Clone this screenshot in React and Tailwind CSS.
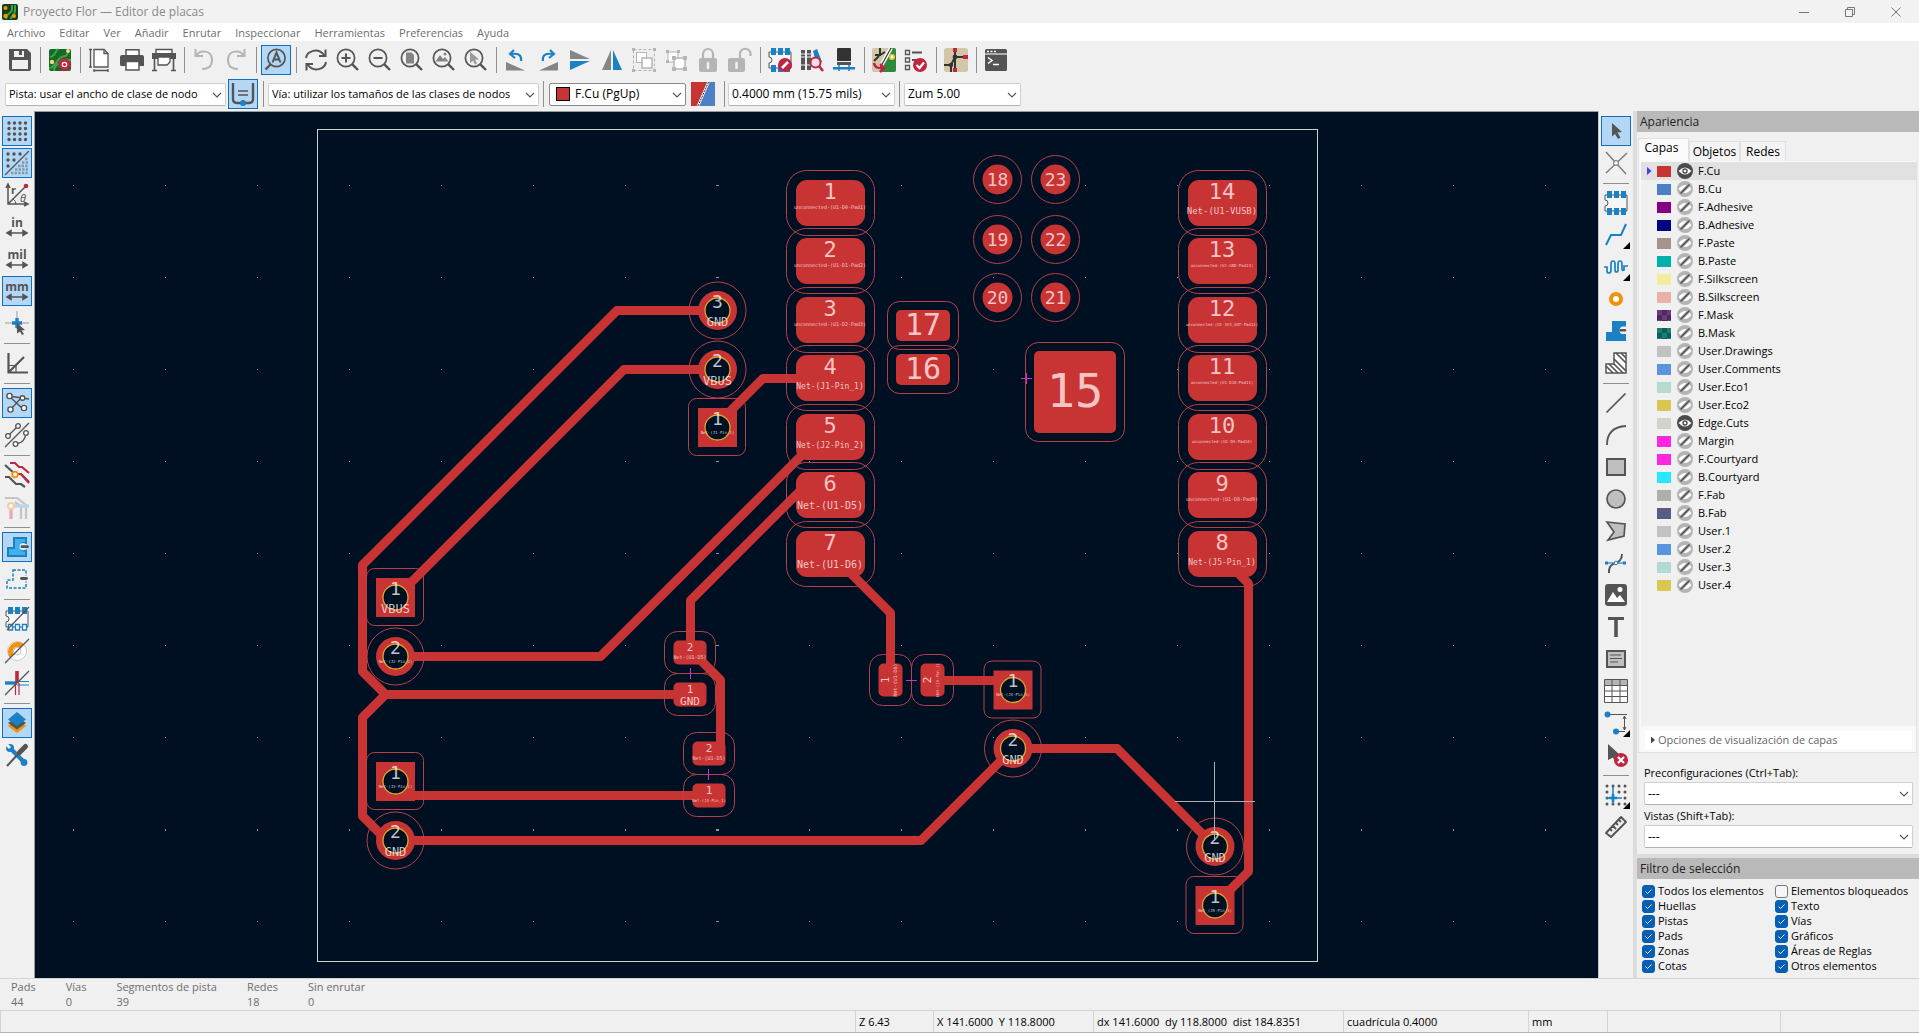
import { useState } from 'react';
import clsx from 'clsx';

const DARK = '#545454';
const BLUE = '#1a81c4';
const SOFT = '#b5b5b5';
const RED = '#bf2641';
const COPPER = '#c83434';

const Lens = ({ children }) => (
  <>
    <circle cx="12.5" cy="10" r="8.6" fill="none" stroke={DARK} strokeWidth="1.7" />
    <path d="M6.5 16.5L1.5 21.5" stroke={DARK} strokeWidth="2.4" />
    {children}
  </>
);

const LensRight = ({ children }) => (
  <>
    <circle cx="10" cy="10" r="8.6" fill="none" stroke={DARK} strokeWidth="1.7" />
    <path d="M16.3 16.3L22 22" stroke={DARK} strokeWidth="2.4" />
    {children}
  </>
);

const Footprint = () => (
  <>
    <path d="M1 4H23V20H1V15A3 3 0 0 0 1 9Z" fill="#f6f6f6" stroke={DARK} strokeWidth="1" />
    <path d="M3 0H8V7H3ZM10 0H15V7H10ZM17 0H22V7H17ZM3 17H8V24H3ZM10 17H15V24H10ZM17 17H22V24H17Z" fill={BLUE} />
  </>
);

const Measure = () => <path d="M2 18H22M2 18L6 15.5V20.5ZM22 18L18 15.5V20.5Z" fill={DARK} stroke={DARK} strokeWidth="1.5" />;

const unitClass = 'fill-[#545454] text-[12px] font-bold';

const ICONS = {
  save: (
    <path fillRule="evenodd" d="M1 1H19L23 5V21Q23 23 21 23H3Q1 23 1 21ZM6 3V9H16V3ZM11 3H14V7H11ZM4 12V21H20V12Z" fill={DARK} />
  ),
  boardSetup: (
    <>
      <rect x="1" y="1" width="22" height="22" rx="2" fill="#136b23" />
      <path d="M2 9C8 8 7 3 10 1M1 20C9 20 7 9 17 8C20 8 20 3 20 1M6 23C6 16 12 16 14 12H23" fill="none" stroke="#42a24a" strokeWidth="2" />
      <circle cx="4" cy="14" r="2.2" fill="#f4d58a" />
      <circle cx="20" cy="3" r="2" fill="#f4d58a" />
      <circle cx="16.5" cy="16.5" r="4" fill="#fff" stroke={RED} strokeWidth="2.4" />
      <circle cx="16.5" cy="16.5" r="5.8" fill="none" stroke={RED} strokeWidth="2" strokeDasharray="2.6 2" />
      <circle cx="16.5" cy="16.5" r="1.6" fill={RED} />
    </>
  ),
  page: (
    <g fill="none" stroke={DARK} strokeWidth="1.3">
      <path d="M6 1.5H16L20 5.5V19H6Z" fill="#fff" />
      <path d="M16 1.5V5.5H20M1 1.5H4M1 19H4M2.5 1.5V19M6 21V24M20 21V24M6 22.5H20" />
    </g>
  ),
  print: (
    <>
      <path d="M6 8V1.7H19V8" fill="#fff" stroke={DARK} strokeWidth="1.5" />
      <path d="M2 7H22Q24 7 24 9V18H19V14H6V18H1Q0 18 0 16V9Q0 7 2 7Z" fill={DARK} />
      <path d="M6 13.5H19V22H6Z" fill="#fff" stroke={DARK} strokeWidth="1.5" />
    </>
  ),
  plot: (
    <>
      <path d="M4 6V1.5H20V6" fill="#fff" stroke={DARK} strokeWidth="1.4" />
      <path d="M0 5H24V11H0Z" fill={DARK} />
      <path d="M6 9H18V14L15 17H6Z" fill="#fff" stroke={DARK} strokeWidth="1.3" />
      <path d="M2.5 11V22M21.5 11V22M0 22.5H5M19 22.5H24" stroke={DARK} strokeWidth="1.6" />
    </>
  ),
  undo: <path d="M3.500 1V8H11M4 8C8 1 20 2 20 12C20 18 16 21 10 21" fill="none" stroke={SOFT} strokeWidth="2" />,
  redo: <path d="M20.500 1V8H13M20 8C16 1 4 2 4 12C4 18 8 21 14 21" fill="none" stroke={SOFT} strokeWidth="2" />,
  find: (
    <Lens>
      <path d="M8.5 14.5L12.5 4.5L16.5 14.5M10 11.5H15" fill="none" stroke={DARK} strokeWidth="2" />
    </Lens>
  ),
  refresh: (
    <path d="M2 10C3 3 14 -1 20 7M21.5 1.5V8H15M22 14C21 21 10 25 4 17M2.5 22.5V16H9" fill="none" stroke={DARK} strokeWidth="2" />
  ),
  zoomIn: (
    <LensRight>
      <path d="M10 5.5V14.5M5.5 10H14.5" stroke={DARK} strokeWidth="2" />
    </LensRight>
  ),
  zoomOut: (
    <LensRight>
      <path d="M5.5 10H14.5" stroke={DARK} strokeWidth="2" />
    </LensRight>
  ),
  zoomPage: (
    <LensRight>
      <path d="M6 4.5H11.5L14 7V15.5H6Z" fill="#858585" />
    </LensRight>
  ),
  zoomObjects: (
    <LensRight>
      <path d="M3.5 13.5L8 7L11 11L13 9L16.5 13.5Z" fill="#858585" />
      <circle cx="13" cy="6" r="1.5" fill="#858585" />
    </LensRight>
  ),
  zoomSelection: (
    <LensRight>
      <path d="M6 3.5L15 11.5L11 11.8L13 15.5L11 16.5L9 12.8L6 15Z" fill="#9a9a9a" />
    </LensRight>
  ),
  rotateLeft: (
    <>
      <path d="M2 14V22.5H21Z" fill="#858585" />
      <path d="M17 13C18 7 14 5 8 6" fill="none" stroke={BLUE} strokeWidth="2.2" />
      <path d="M10 2L6 6L11 10" fill="none" stroke={BLUE} strokeWidth="2.2" />
    </>
  ),
  rotateRight: (
    <>
      <path d="M22 14V22.5H3Z" fill="#858585" />
      <path d="M7 13C6 7 10 5 16 6" fill="none" stroke={BLUE} strokeWidth="2.2" />
      <path d="M14 2L18 6L13 10" fill="none" stroke={BLUE} strokeWidth="2.2" />
    </>
  ),
  flipV: (
    <>
      <path d="M2 2V11H22Z" fill="#858585" />
      <path d="M2 22V13H22Z" fill={BLUE} />
    </>
  ),
  flipH: (
    <>
      <path d="M2 22H11V2Z" fill="#858585" />
      <path d="M22 22H13V2Z" fill={BLUE} />
    </>
  ),
  group: (
    <g stroke={SOFT} fill="none">
      <rect x="1.5" y="1.5" width="21" height="21" strokeDasharray="3 2" />
      <rect x="4.5" y="4.5" width="10" height="10" fill="#fff" />
      <rect x="10" y="10" width="10" height="10" fill="#fff" strokeWidth="1.5" />
      <path d="M0 0H3V3H0ZM21 0H24V3H21ZM0 21H3V24H0ZM21 21H24V24H21Z" fill={SOFT} stroke="none" />
    </g>
  ),
  ungroup: (
    <g stroke={SOFT} fill="#fff">
      <rect x="4" y="4" width="10" height="10" />
      <rect x="10" y="10" width="11" height="11" strokeWidth="1.5" />
      <path d="M2 2H5V5H2ZM13 2H16V5H13ZM2 12H5V15H2ZM8 8H12V12H8ZM19 8H23V12H19ZM8 19H12V23H8ZM19 19H23V23H19Z" fill={SOFT} stroke="none" />
    </g>
  ),
  lock: (
    <>
      <path d="M7 12V6A5 5 0 0 1 17 6V12" fill="none" stroke={SOFT} strokeWidth="2.2" />
      <rect x="3" y="10" width="18" height="14" rx="2" fill={SOFT} />
      <path d="M12 15V20" stroke="#f0f0f0" strokeWidth="2.6" strokeLinecap="round" />
    </>
  ),
  unlock: (
    <>
      <path d="M12 12V6A5 5 0 0 1 22.5 6V8" fill="none" stroke={SOFT} strokeWidth="2.2" />
      <rect x="0" y="10" width="17" height="14" rx="2" fill={SOFT} />
      <path d="M8.5 15V20" stroke="#f0f0f0" strokeWidth="2.6" strokeLinecap="round" />
    </>
  ),
  footprintEdit: (
    <>
      <Footprint />
      <circle cx="17" cy="17" r="7" fill={RED} />
      <path d="M14 20L20 14" stroke="#fff" strokeWidth="2.6" />
    </>
  ),
  library: (
    <>
      <path d="M1 2H5V22H1ZM7 2H11V22H7Z" fill={DARK} />
      <path d="M1 6H11M1 9H11M1 17H11" stroke="#ededed" strokeWidth="1" />
      <path d="M13 3L17 1L22 14H16Z" fill={BLUE} />
      <circle cx="15.5" cy="14.5" r="5" fill="#f7dfe5" stroke={RED} strokeWidth="2" />
      <path d="M19 18L23 23" stroke={RED} strokeWidth="2.6" />
    </>
  ),
  footprintBrowse: (
    <>
      <path d="M5 1Q5 0 6 0H18Q19 0 19 1V13H5Z" fill="#333" />
      <path d="M5 14H19V17H5Z" fill={DARK} />
      <path d="M1 19H23V21.5H1Z" fill={BLUE} />
      <path d="M7 17V23M17 17V23" stroke={BLUE} strokeWidth="1.5" />
    </>
  ),
  updateBoard: (
    <>
      <path d="M2 0H22Q24 0 24 2V22Q24 24 22 24H2Q0 24 0 22V2Q0 0 2 0Z" fill="#d3c6a8" />
      <path d="M17 0H22Q24 0 24 2V22Q24 24 22 24H8Z" fill="#2e8b3a" />
      <path d="M8 0V7H3M8 7L13 4M2 13L7 8" stroke="#333" strokeWidth="2" fill="none" />
      <path d="M19 0L8 20" stroke="#fff" strokeWidth="4" />
      <path d="M19 0L8 20" stroke="#333" strokeWidth="1.2" />
      <circle cx="20" cy="9" r="2.2" fill="#fff" stroke="#f4c430" strokeWidth="1.6" />
      <path d="M2 15C3 20 6 20 11 20M8 16L12 20L8 24" fill="none" stroke={RED} strokeWidth="2.6" />
    </>
  ),
  drc: (
    <>
      <g fill="none" stroke={DARK} strokeWidth="1.3">
        <path d="M1.5 2.5H5.5V6.5H1.5ZM1.5 10H5.5V14H1.5ZM1.5 17.5H5.5V21.5H1.5Z" />
        <path d="M8 4.5H18M8 12H14" strokeWidth="2" />
      </g>
      <circle cx="16" cy="17" r="7" fill={RED} />
      <path d="M12.5 17L15.5 20L20 14.5" fill="none" stroke="#fff" strokeWidth="2.2" />
    </>
  ),
  schematic: (
    <>
      <rect width="24" height="24" rx="2.5" fill="#d3c6a8" />
      <path d="M11 0V9L7 17V24M11 9H24M0 17H7M11 9V24" stroke="#333" strokeWidth="2" fill="none" />
      <path d="M9 0H13V4H9ZM19 7H24V11H19ZM9 20H13V24H9Z" fill={RED} />
      <circle cx="11" cy="9" r="2.4" fill="#333" />
      <circle cx="7" cy="17" r="2.2" fill="#333" />
    </>
  ),
  console: (
    <>
      <rect x="1" y="1" width="22" height="22" rx="1.5" fill={DARK} />
      <path d="M1 6H23" stroke="#ededed" strokeWidth="1.2" />
      <path d="M3 3.5H5M6.5 3.5H8.5M10 3.5H12M4 9.5L8 12.5L4 15.5M9 16.5H15" fill="none" stroke="#fff" strokeWidth="1.5" />
    </>
  ),
  trackWidth: (
    <>
      <path d="M2 1V17Q2 21 6 21H18Q22 21 22 17V1" fill="none" stroke={DARK} strokeWidth="2.4" />
      <path d="M7 9H17M7 13H17" stroke={DARK} strokeWidth="1.4" />
      <circle cx="12" cy="21" r="3" fill={BLUE} />
    </>
  ),
  layerPair: (
    <>
      <path d="M0 0H24V24H0Z" fill="#4d7fc4" />
      <path d="M0 0H17L6 24H0Z" fill={COPPER} />
      <path d="M17.5 0L7 24" stroke="#fff" strokeWidth="2.4" />
      <path d="M17.5 0L7 24" stroke="#333" strokeWidth="1" strokeDasharray="2 1" />
    </>
  ),
  grid: (
    <path d="M4 4h.01M9.500 4h.01M15 4h.01M20.500 4h.01M4 9.500h.01M9.500 9.500h.01M15 9.500h.01M20.500 9.500h.01M4 15h.01M9.500 15h.01M15 15h.01M20.500 15h.01M4 20.500h.01M9.500 20.500h.01M15 20.500h.01M20.500 20.500h.01" stroke={DARK} strokeWidth="3.4" strokeLinecap="round" />
  ),
  gridOverride: (
    <>
      <path d="M3 3h.01M9 3h.01M15 3h.01M3 9h.01M9 9h.01M3 15h.01" stroke={DARK} strokeWidth="3.4" strokeLinecap="round" />
      <path d="M0 24L24 0" stroke={DARK} strokeWidth="1.2" />
      <path d="M20 8H23M17 11.5H23M13 15H23M10 18.5H23M6 22H23" stroke="#8298ab" strokeWidth="2.4" strokeDasharray="2.4 1.2" />
    </>
  ),
  polar: (
    <>
      <path d="M3 1V21H23M3 21L20 4M1 5L3 1L5 5M19 19L23 21L19 23" fill="none" stroke={DARK} strokeWidth="1.5" />
      <path d="M8 16Q11 18 11 21" fill="none" stroke={DARK} />
      <circle cx="21" cy="3" r="2.3" fill={RED} />
      <text x="6" y="11" className="fill-[#545454] text-[11px] font-bold">r</text>
      <text x="15" y="19" className="fill-[#545454] text-[11px] italic">θ</text>
    </>
  ),
  inches: (
    <>
      <text x="12" y="12" textAnchor="middle" className={unitClass}>in</text>
      <Measure />
    </>
  ),
  mils: (
    <>
      <text x="12" y="12" textAnchor="middle" className={unitClass}>mil</text>
      <Measure />
    </>
  ),
  millimeters: (
    <>
      <text x="12" y="12" textAnchor="middle" className={unitClass}>mm</text>
      <Measure />
    </>
  ),
  cursor: (
    <>
      <path d="M0 12H24M12 0V18" stroke="#9a9a9a" strokeWidth="1" />
      <path d="M7 12H17M12 7V17" stroke={BLUE} strokeWidth="3.4" />
      <path d="M12 12L20 19L16.5 19.5L19 23L17 24L15 20.5L12 22.5Z" fill={DARK} />
    </>
  ),
  angle: (
    <>
      <path d="M3.5 2V21.5H23M3.5 21.5L19 6" fill="none" stroke={DARK} strokeWidth="2.2" />
      <path d="M4 14.5H11V21" fill="none" stroke={DARK} strokeWidth="1.2" />
    </>
  ),
  ratsnest: (
    <>
      <path d="M4 5L19 19M6 18L17 6M4 5L17 7L24 8" stroke={DARK} strokeWidth="1.4" fill="none" />
      <g fill="#fff" stroke={DARK} strokeWidth="1.4">
        <circle cx="4.5" cy="5" r="2.6" />
        <circle cx="17.5" cy="7" r="2.3" />
        <circle cx="5.5" cy="18.5" r="2.6" />
        <circle cx="19" cy="17" r="2.6" />
      </g>
    </>
  ),
  ratsnestCurved: (
    <>
      <path d="M0 24L24 0M3 13L13 3M11 21Q20 20 21 10" stroke={DARK} strokeWidth="1.3" fill="none" />
      <g fill="#fff" stroke={DARK} strokeWidth="1.3">
        <circle cx="3" cy="13" r="2.3" />
        <circle cx="13" cy="3" r="2.3" />
        <circle cx="10.5" cy="21" r="2.3" />
        <circle cx="21" cy="10" r="2.3" />
      </g>
    </>
  ),
  highContrast: (
    <>
      <path d="M0 2L10 11H16L24 19M0 14H4L11 21H16L20 24" fill="none" stroke={DARK} strokeWidth="2.2" />
      <path d="M5 0H10L14 4H17L24 10M12 11H16L24 20" fill="none" stroke={RED} strokeWidth="2.2" />
      <circle cx="10" cy="11.5" r="2.8" fill="#fff" stroke="#f0920a" strokeWidth="1.8" />
    </>
  ),
  netHighlight: (
    <g opacity="0.5" fill="none">
      <path d="M0 3H12L21 10V24M10 7L16 11V24" stroke="#9a9a9a" strokeWidth="2.2" />
      <path d="M6 12V24" stroke="#e0607a" strokeWidth="3.2" />
      <path d="M6 11H24" stroke="#7ec0ea" strokeWidth="3.2" />
      <circle cx="6" cy="11" r="3" fill="#fff" stroke="#f4b04a" strokeWidth="2" />
    </g>
  ),
  zoneFill: (
    <>
      <path d="M9 3H21V8H18A4 4 0 0 0 18 15.500H21V21H3V13H9Z" fill="#42b0ee" stroke={BLUE} strokeWidth="2" />
      <circle cx="18" cy="11.7" r="3.6" fill="#d7ecfa" />
      <path d="M17 11.7H22.5" stroke={DARK} strokeWidth="2.8" strokeLinecap="round" />
    </>
  ),
  zoneOutline: (
    <>
      <path d="M8 3H21V21H2V13H8Z" fill="none" stroke={BLUE} strokeWidth="1.5" strokeDasharray="3 1.5" />
      <path d="M14 11.5H22" stroke="#f0f0f0" strokeWidth="6" />
      <path d="M16.5 11.5H21.5" stroke={DARK} strokeWidth="2.8" strokeLinecap="round" />
    </>
  ),
  padOutline: (
    <>
      <path d="M1 4H23V20H1V15A3 3 0 0 0 1 9Z" fill="#f6f6f6" stroke={DARK} />
      <path d="M3 0H8V7H3ZM10 0H15V7H10ZM17 0H22V7H17Z" fill={BLUE} />
      <path d="M3.5 17.5H7.5V23H3.5ZM10.5 17.5H14.5V23H10.5ZM17.5 17.5H21.5V23H17.5Z" fill="#fff" stroke={BLUE} strokeWidth="1.3" />
      <path d="M2 23L24 0" stroke={DARK} strokeWidth="1.2" />
    </>
  ),
  viaOutline: (
    <>
      <circle cx="12" cy="12" r="9.5" fill="#fff" stroke="#c9c9c9" />
      <path d="M5 19A10 10 0 0 1 19 5L15 9A4.500 4.500 0 0 0 9 15Z" fill="#f0920a" />
      <circle cx="12" cy="12" r="4" fill="none" stroke="#c9c9c9" />
      <path d="M0 24L24 0" stroke={DARK} strokeWidth="1.2" />
    </>
  ),
  trackOutline: (
    <>
      <path d="M0 12H12" stroke={BLUE} strokeWidth="3.4" />
      <path d="M12 0V12" stroke={RED} strokeWidth="3.6" />
      <path d="M12 10.5H24M12 14H24" stroke={BLUE} strokeWidth="1.2" />
      <path d="M10.5 12V24M14 12V24" stroke={RED} strokeWidth="1.2" />
      <path d="M0 24L24 0" stroke={DARK} strokeWidth="1.2" />
    </>
  ),
  layers: (
    <>
      <path d="M12 8L21 15L12 22L3 15Z" fill="#f0920a" />
      <path d="M12 6L21 12L12 18.5L3 12Z" fill={DARK} />
      <path d="M12 1L21 8.5L12 15L3 8.5Z" fill={BLUE} />
    </>
  ),
  tools: (
    <>
      <path d="M5 5L19 19" stroke={BLUE} strokeWidth="4.2" />
      <circle cx="5" cy="5" r="4" fill={BLUE} />
      <path d="M0 0L5 5" stroke="#f0f0f0" strokeWidth="3" />
      <circle cx="19" cy="19.5" r="3.4" fill={BLUE} />
      <path d="M2 23L15 9" stroke={DARK} strokeWidth="2" />
      <path d="M14.5 9.5L20.5 3.5" stroke={DARK} strokeWidth="5" strokeLinecap="round" />
    </>
  ),
  select: <path d="M8 4L18 13L13.500 13.500L16.500 18.500L14 20L11 15L8 17.500Z" fill={DARK} />,
  highlightNet: (
    <>
      <path d="M2 1L22 23M23 2L2 22" stroke="#7a7a7a" strokeWidth="1.4" />
      <circle cx="12" cy="12" r="2.4" fill="#fff" stroke="#8a8a8a" strokeWidth="1.3" />
    </>
  ),
  footprint: <Footprint />,
  route: <path d="M2 22L7 12H17L22 1" fill="none" stroke={BLUE} strokeWidth="2" />,
  tuneLength: (
    <path d="M0 12H3V16Q3 18 5 18T7 15V9Q7 6 9 6T11 9V15Q11 17 12.500 17T14 15V9Q14 6 16 6T18 9V14Q18 16 20 15V11H24" fill="none" stroke={BLUE} strokeWidth="1.7" />
  ),
  via: <circle cx="12" cy="12" r="5" fill="#fff" stroke="#f0920a" strokeWidth="4" />,
  zone: (
    <>
      <path d="M8 2H22V7.500H18A4 4 0 0 0 18 15H22V22H2V13H8Z" fill={BLUE} />
      <path d="M16.500 11.200H21" stroke={DARK} strokeWidth="2.400" strokeLinecap="round" />
    </>
  ),
  ruleArea: (
    <>
      <path d="M10 2H22V22H2V13H10Z" fill="#fff" stroke={DARK} strokeWidth="1.5" />
      <path d="M10 8L22 20M12 2L22 12M17 2L22 7M10 13L19 22M5 13L14 22M2 15L9 22" stroke={DARK} strokeWidth="1.7" />
    </>
  ),
  line: <path d="M3 21L21 3" stroke={DARK} strokeWidth="1.7" strokeLinecap="round" />,
  arc: <path d="M3 22Q3 4 22 3" fill="none" stroke={DARK} strokeWidth="1.8" />,
  rect: <path d="M3 4H21V20H3Z" fill="#bfbfbf" stroke={DARK} strokeWidth="2" />,
  circle: <circle cx="12" cy="12" r="9" fill="#bfbfbf" stroke={DARK} strokeWidth="1.7" />,
  polygon: <path d="M3 3L21 5L20 17L4 21L10 13Z" fill="#bfbfbf" stroke={DARK} strokeWidth="1.7" />,
  bezier: (
    <>
      <path d="M5 22C4 8 18 16 18 3" fill="none" stroke={DARK} strokeWidth="1.9" />
      <path d="M3 12H21" stroke={BLUE} strokeWidth="1.2" />
      <path d="M1 10.5H4V13.5H1ZM19 10.5H22V13.5H19Z" fill={BLUE} />
      <circle cx="12" cy="12" r="1.8" fill="#fff" stroke={BLUE} />
    </>
  ),
  image: (
    <>
      <rect x="1" y="1" width="22" height="22" rx="3" fill={DARK} />
      <path d="M3 19L9 9L13 15L16 12L21 19Z" fill="#fff" />
      <circle cx="16" cy="6.5" r="2.5" fill="#fff" />
    </>
  ),
  text: <path d="M4 2H20V5H13.800V22H10.200V5H4Z" fill={DARK} />,
  textBox: (
    <>
      <path d="M3 4H21V20H3Z" fill="#bfbfbf" stroke={DARK} strokeWidth="2" />
      <path d="M6 8H17M6 11.5H18M6 15H14" stroke={DARK} strokeWidth="1.2" />
    </>
  ),
  table: (
    <>
      <path d="M0.5 0.5H23.5V23.5H0.5Z" fill="#fff" stroke={DARK} />
      <path d="M1 1H23V6H1Z" fill="#b5b5b5" />
      <path d="M0 6.5H24M0 12H24M0 17.5H24M8 0V24M16 0V24" stroke={DARK} />
    </>
  ),
  dimension: (
    <>
      <path d="M3 3.5H23M12 20.5H21M20.5 5V19M19 8L20.5 5L22 8M19 16L20.5 19L22 16" fill="none" stroke={DARK} />
      <circle cx="3.5" cy="3.5" r="3" fill={BLUE} />
      <circle cx="12" cy="20.5" r="3" fill={BLUE} />
    </>
  ),
  deleteTool: (
    <>
      <path d="M4 1L16 12L11 13L13.5 18L11 19L9 14.5L4 17Z" fill={DARK} />
      <circle cx="17" cy="17" r="7" fill={RED} />
      <path d="M14 14L20 20M20 14L14 20" stroke="#fff" strokeWidth="2.2" />
    </>
  ),
  gridOrigin: (
    <>
      <path d="M3 3h.01M9 3h.01M15 3h.01M21 3h.01M3 9h.01M15 9h.01M21 9h.01M3 15h.01M21 15h.01M3 21h.01M9 21h.01M15 21h.01M21 21h.01" stroke={DARK} strokeWidth="3" strokeLinecap="round" />
      <path d="M9 4V21M2 15H18" stroke={BLUE} strokeWidth="1.5" />
      <path d="M9 11V19M5 15H13" stroke={BLUE} strokeWidth="2.6" />
    </>
  ),
  ruler: (
    <path d="M2 18L17 2L22 7L7 22ZM6 14L8 16M9 11L12 14M12 8L14 10M15 5L17 7" fill="none" stroke={DARK} strokeWidth="1.9" strokeLinejoin="round" />
  ),
};

const MENUS = ['Archivo', 'Editar', 'Ver', 'Añadir', 'Enrutar', 'Inspeccionar', 'Herramientas', 'Preferencias', 'Ayuda'];

// '|' is a separator
const TOP_TOOLS = [
  'save', '|', 'boardSetup', '|', 'page', 'print', 'plot', '|', 'undo', 'redo', '|', 'find', '|',
  'refresh', 'zoomIn', 'zoomOut', 'zoomPage', 'zoomObjects', 'zoomSelection', '|',
  'rotateLeft', 'rotateRight', 'flipV', 'flipH', 'group', 'ungroup', 'lock', 'unlock', '|',
  'footprintEdit', 'library', 'footprintBrowse', '|', 'updateBoard', 'drc', '|', 'schematic', '|', 'console',
];

const LEFT_TOOLS = [
  'grid', 'gridOverride', 'polar', 'inches', 'mils', 'millimeters', 'cursor', '|', 'angle', '|',
  'ratsnest', 'ratsnestCurved', '|', 'highContrast', 'netHighlight', '|', 'zoneFill', 'zoneOutline', '|',
  'padOutline', 'viaOutline', 'trackOutline', '|', 'layers', 'tools',
];

const RIGHT_TOOLS = [
  'select', 'highlightNet', '|', 'footprint', 'route', 'tuneLength', 'via', 'zone', 'ruleArea', '|',
  'line', 'arc', 'rect', 'circle', 'polygon', 'bezier', 'image', 'text', 'textBox', 'table',
  'dimension', 'deleteTool', '|', 'gridOrigin', 'ruler',
];

const ACTIVE = ['find', 'trackWidth', 'grid', 'gridOverride', 'millimeters', 'ratsnest', 'zoneFill', 'layers', 'select'];
const WITH_PALETTE = ['route', 'tuneLength', 'dimension', 'gridOrigin'];

const LAYERS = [
  ['F.Cu', 'bg-[#c83434]'],
  ['B.Cu', 'bg-[#4d7fc4]'],
  ['F.Adhesive', 'bg-[#840084]'],
  ['B.Adhesive', 'bg-[#000084]'],
  ['F.Paste', 'bg-[#a6948b]'],
  ['B.Paste', 'bg-[#00b0ad]'],
  ['F.Silkscreen', 'bg-[#f2eda1]'],
  ['B.Silkscreen', 'bg-[#e8b2a7]'],
  ['F.Mask', 'bg-[repeating-conic-gradient(#4b2a63_0_25%,#6a3c7c_0_50%)] bg-size-[10px_10px]'],
  ['B.Mask', 'bg-[repeating-conic-gradient(#0c5f57_0_25%,#1c7f72_0_50%)] bg-size-[10px_10px]'],
  ['User.Drawings', 'bg-[#c2c2c2]'],
  ['User.Comments', 'bg-[#5994dc]'],
  ['User.Eco1', 'bg-[#b4dbd2]'],
  ['User.Eco2', 'bg-[#d8c852]'],
  ['Edge.Cuts', 'bg-[#d0d2cd]'],
  ['Margin', 'bg-[#ff26e2]'],
  ['F.Courtyard', 'bg-[#ff26e2]'],
  ['B.Courtyard', 'bg-[#26e9ff]'],
  ['F.Fab', 'bg-[#afafaf]'],
  ['B.Fab', 'bg-[#585d84]'],
  ['User.1', 'bg-[#c2c2c2]'],
  ['User.2', 'bg-[#5994dc]'],
  ['User.3', 'bg-[#b4dbd2]'],
  ['User.4', 'bg-[#d8c852]'],
];

const FILTERS = [
  ['Todos los elementos', true],
  ['Elementos bloqueados', false],
  ['Huellas', true],
  ['Texto', true],
  ['Pistas', true],
  ['Vías', true],
  ['Pads', true],
  ['Gráficos', true],
  ['Zonas', true],
  ['Áreas de Reglas', true],
  ['Cotas', true],
  ['Otros elementos', true],
];

const STATS = [
  ['Pads', '44'],
  ['Vías', '0'],
  ['Segmentos de pista', '39'],
  ['Redes', '18'],
  ['Sin enrutar', '0'],
];

const ToolButton = ({ name }) => (
  <button
    type="button"
    aria-label={name}
    className={clsx(
      'relative m-px flex size-[30px] shrink-0 items-center justify-center border',
      ACTIVE.includes(name) ? 'border-[#0f6fc0] bg-[#b3d7f5]' : 'border-transparent'
    )}
  >
    <svg viewBox="0 0 24 24" className="size-6 overflow-visible">{ICONS[name]}</svg>
    {WITH_PALETTE.includes(name) && (
      <span className="absolute right-0 bottom-0 size-[7px] bg-black [clip-path:polygon(100%_0,100%_100%,0_100%)]" />
    )}
  </button>
);

const VerticalTools = ({ tools }) => (
  <div className="flex w-[34px] shrink-0 flex-col items-center bg-[#f0f0f0] pt-1">
    {tools.map((tool, i) =>
      tool === '|' ? (
        <div key={i} className="flex h-2 shrink-0 items-center">
          <div className="h-px w-[26px] bg-[#8f8f8f]" />
        </div>
      ) : (
        <ToolButton key={i} name={tool} />
      )
    )}
  </div>
);

const Separator = () => (
  <div className="flex h-8 w-2 shrink-0 items-center justify-center">
    <div className="h-[26px] w-px bg-[#8f8f8f]" />
  </div>
);

const Combo = ({ label, value, width, swatch, small }) => (
  <div className={clsx('relative h-[23px] shrink-0', width)}>
    <select
      aria-label={label}
      className={clsx(
        'h-full w-full appearance-none rounded-xs border bg-white pr-5 text-black outline-none',
        swatch ? 'border-[#8a8a8a] pl-[25px]' : 'border-[#cfcfcf] border-b-[#b0b0b0] pl-[3px]',
        small ? 'text-[11px]' : 'text-[12px]'
      )}
    >
      <option>{value}</option>
    </select>
    {swatch && <span className="pointer-events-none absolute top-[4px] left-[7px] size-[14px] border border-black bg-[#c83434]" />}
    <svg viewBox="0 0 10 6" className="pointer-events-none absolute top-[9px] right-[4px] h-[6px] w-[10px]">
      <path d="M1 1L5 5L9 1" fill="none" stroke="#555" strokeWidth="1.1" />
    </svg>
  </div>
);

const EyeIcon = ({ visible }) =>
  visible ? (
    <svg viewBox="0 0 16 16" className="size-4">
      <circle cx="8" cy="8" r="8" fill="#4b4b4b" />
      <path d="M1.500 8Q8 1 14.500 8Q8 15 1.500 8Z" fill="#fff" />
      <circle cx="8" cy="8" r="2" fill="#fff" stroke="#4b4b4b" strokeWidth="1.4" />
    </svg>
  ) : (
    <svg viewBox="0 0 16 16" className="size-4">
      <circle cx="8" cy="8" r="8" fill="#b4b4b4" />
      <path d="M1.500 8Q8 0 14.500 8Q8 16 1.500 8Z" fill="#fff" />
      <path d="M3.500 12.500L12.500 3.500" stroke="#b4b4b4" strokeWidth="3.4" />
      <path d="M3.500 12.500L12.500 3.500" stroke="#4b4b4b" strokeWidth="1.4" />
    </svg>
  );

/* Board */

const TRACKS = [
  'M717 310.5H617L362.5 565V671.5L385.5 694.5H690',
  'M385.5 694.5L362.5 717.5V816L387 840.5',
  'M717 369.5H624L395.5 598',
  'M830 378.5H763L717 424.5',
  'M812 445L600.5 656.5H396',
  'M804 487L690.5 600.5V650L720.5 680V748',
  'M396 795.5H708',
  'M396 840.5H921L1013 748.5H1117L1215 846.5',
  'M848 570.5L890.5 613V680',
  'M932 680.5H1013',
  'M1238 573L1248.5 583.5V871.5L1215 905',
];

const LEFT_PADS = [
  ['1', 'unconnected-(U1-D0-Pad1)'],
  ['2', 'unconnected-(U1-D1-Pad2)'],
  ['3', 'unconnected-(U1-D2-Pad3)'],
  ['4', 'Net-(J1-Pin_1)'],
  ['5', 'Net-(J2-Pin_2)'],
  ['6', 'Net-(U1-D5)'],
  ['7', 'Net-(U1-D6)'],
];

const RIGHT_PADS = [
  ['14', 'Net-(U1-VUSB)'],
  ['13', 'unconnected-(U1-GND-Pad13)'],
  ['12', 'unconnected-(U1-3V3_OUT-Pad12)'],
  ['11', 'unconnected-(U1-D10-Pad11)'],
  ['10', 'unconnected-(U1-D9-Pad10)'],
  ['9', 'unconnected-(U1-D8-Pad9)'],
  ['8', 'Net-(J5-Pin_1)'],
];

const PAD_Y = [180, 238, 297, 355, 414, 472, 531];

const ROUND_PADS = [
  ['18', 997.5, 179.5],
  ['23', 1055.5, 179.5],
  ['19', 997.5, 239.5],
  ['22', 1055.5, 239.5],
  ['20', 997.5, 297.5],
  ['21', 1055.5, 297.5],
];

const HOLES = [
  { x: 717.5, y: 310.5, num: '3', net: 'GND' },
  { x: 717.5, y: 369.5, num: '2', net: 'VBUS' },
  { x: 717.5, y: 427.5, num: '1', net: 'Net-(J1-Pin_1)', square: true },
  { x: 395.5, y: 597.5, num: '1', net: 'VBUS', square: true },
  { x: 395.5, y: 656.5, num: '2', net: 'Net-(J2-Pin_2)' },
  { x: 395.5, y: 781.5, num: '1', net: 'Net-(J3-Pin_1)', square: true },
  { x: 395.5, y: 840.5, num: '2', net: 'GND' },
  { x: 1013, y: 690, num: '1', net: 'Net-(J4-Pin_1)', square: true },
  { x: 1013, y: 748.5, num: '2', net: 'GND' },
  { x: 1215, y: 846.5, num: '2', net: 'GND' },
  { x: 1215, y: 905.5, num: '1', net: 'Net-(J5-Pin_1)', square: true },
];

const SMD_PADS = [
  { x: 690, y: 652.5, num: '2', net: 'Net-(U1-D5)' },
  { x: 690, y: 694.5, num: '1', net: 'GND' },
  { x: 709, y: 753.5, num: '2', net: 'Net-(U1-D5)' },
  { x: 709, y: 795.5, num: '1', net: 'Net-(J3-Pin_1)' },
  { x: 890.5, y: 680, num: '1', net: 'Net-(U1-D6)', turned: true },
  { x: 932.5, y: 680, num: '2', net: 'Net-(J4-Pin_1)', turned: true },
];

// long net names shrink to stay inside the pad
const netSize = (net) => {
  if (net.length > 24) return 'text-[4px]';
  if (net.length > 20) return 'text-[5px]';
  if (net.length > 13) return 'text-[8px]';
  return net.length > 11 ? 'text-[9px]' : 'text-[10px]';
};

const ModulePad = ({ x, y, num, net }) => (
  <g textAnchor="middle">
    <rect x={x - 34} y={y} width="69" height="46" rx="11" fill={COPPER} />
    <text x={x} y={y + 19} className="text-[22px]">{num}</text>
    <text x={x} y={y + (net.length > 20 ? 29 : net.length > 11 ? 34 : 37)} className={netSize(net)}>{net}</text>
  </g>
);

const Hole = ({ x, y, num, net, square }) => {
  const long = net.length > 4;
  return (
    <g textAnchor="middle">
      {square ? (
        <rect x={x - 19.5} y={y - 19.5} width="39" height="39" fill={COPPER} />
      ) : (
        <circle cx={x} cy={y} r="19.5" fill={COPPER} />
      )}
      <circle cx={x} cy={y} r="12.5" fill="#001023" stroke="#d8a92c" strokeWidth="1.3" />
      <g className="fill-white/75">
        <text x={x} y={y - 3} className="text-[18px]">{num}</text>
        <text x={x} y={y + (long ? 6 : 15)} className={long ? 'text-[4px]' : 'text-[12px]'}>{net}</text>
      </g>
    </g>
  );
};

const SmdPad = ({ x, y, num, net, turned }) => (
  <g textAnchor="middle" transform={`translate(${x} ${y}) rotate(${turned ? -90 : 0})`}>
    <rect x="-16.5" y="-12" width="33" height="24" rx="5" fill={COPPER} />
    <text x="0" y="-2" className="text-[11px]">{num}</text>
    <text x="0" y={net === 'GND' ? 10 : 6} className={net === 'GND' ? 'text-[11px]' : net.length > 12 ? 'text-[4px]' : 'text-[5px]'}>{net}</text>
  </g>
);

const columns = Array.from({ length: 17 }, (_, i) => 73 + i * 92);
const rows = Array.from({ length: 9 }, (_, i) => 185 + i * 92);

const Board = () => (
  <svg
    viewBox="35 112 1563 866"
    preserveAspectRatio="xMidYMid slice"
    className="block h-full w-full bg-[#001023] fill-[#f5c4c4] font-['DejaVu_Sans_Mono',monospace]"
  >
    {rows.map((y) =>
      columns.map((x) => (
        <rect key={`${x}-${y}`} x={x === 717 ? 716 : x} y={y} width={x === 717 ? 3 : 1} height={y === 829 ? 2 : 1} fill="#8d949c" />
      ))
    )}
    <rect x="317.5" y="129.5" width="1000" height="832" fill="none" stroke="#d0d2cd" />

    <g fill="none" stroke={COPPER} strokeWidth="9" strokeLinejoin="round">
      {TRACKS.map((d) => <path key={d} d={d} />)}
    </g>

    {LEFT_PADS.map(([num, net], i) => <ModulePad key={num} x={830} y={PAD_Y[i]} num={num} net={net} />)}
    {RIGHT_PADS.map(([num, net], i) => <ModulePad key={num} x={1222} y={PAD_Y[i]} num={num} net={net} />)}
    {ROUND_PADS.map(([num, x, y]) => (
      <g key={num} textAnchor="middle">
        <circle cx={x} cy={y} r="15" fill={COPPER} />
        <text x={x} y={y + 6.5} className="text-[18px]">{num}</text>
      </g>
    ))}
    <g textAnchor="middle">
      <rect x="896" y="310" width="54" height="31" rx="5" fill={COPPER} />
      <text x="923" y="335" className="text-[30px]">17</text>
      <rect x="896" y="354" width="54" height="31" rx="5" fill={COPPER} />
      <text x="923" y="379" className="text-[30px]">16</text>
      <rect x="1034" y="351" width="82" height="82" rx="5" fill={COPPER} />
      <text x="1075" y="407" className="text-[47px]">15</text>
    </g>
    {SMD_PADS.map((pad) => <SmdPad key={`${pad.x}-${pad.y}`} {...pad} />)}
    {HOLES.map((hole) => <Hole key={`${hole.x}-${hole.y}`} {...hole} />)}

    {/* clearance outlines */}
    <g fill="none" stroke="#b8404a">
      {PAD_Y.map((y) => <rect key={y} x="786.5" y={y - 9.5} width="88" height="65" rx="20" />)}
      {PAD_Y.map((y) => <rect key={y} x="1178.5" y={y - 9.5} width="88" height="65" rx="20" />)}
      {ROUND_PADS.map(([num, x, y]) => <circle key={num} cx={x} cy={y} r="24" />)}
      {HOLES.map(({ x, y, square }) =>
        square ? (
          <rect key={`${x}-${y}`} x={x - 29} y={y - 29} width="57" height="57" rx="8" />
        ) : (
          <circle key={`${x}-${y}`} cx={x} cy={y} r="28.5" />
        )
      )}
      {SMD_PADS.map(({ x, y, turned }) => (
        <rect key={`${x}-${y}`} x={x - (turned ? 21 : 25.5)} y={y - (turned ? 25.5 : 21)} width={turned ? 42 : 51} height={turned ? 51 : 42} rx="13" />
      ))}
      <rect x="887.5" y="301.5" width="71" height="48" rx="12" />
      <rect x="887.5" y="345.5" width="71" height="48" rx="12" />
      <rect x="1025.5" y="342.5" width="99" height="99" rx="13" />
    </g>

    <path d="M1026.5 373V384M1021 378.5H1032M690.5 668V679M708.5 769V780M906 680.5H917" stroke="#d030c8" />
    <path d="M1214.5 762V841M1175 801.5H1255" stroke="#a9b0b6" />
  </svg>
);

const PanelTitle = ({ children }) => (
  <h2 className="flex h-[21px] shrink-0 items-center bg-[#b9b9b9] pl-[3px] text-[12px] text-[#222]">{children}</h2>
);

const AppearancePanel = () => {
  const [tab, setTab] = useState('Capas');

  return (
    <section className="flex min-h-0 flex-1 flex-col bg-[#f0f0f0]">
      <PanelTitle>Apariencia</PanelTitle>
      <div role="tablist" className="flex h-[29px] shrink-0 items-end pl-px text-[12px]">
        {['Capas', 'Objetos', 'Redes'].map((t) => (
          <button
            key={t}
            type="button"
            role="tab"
            aria-selected={tab === t}
            onClick={() => setTab(t)}
            className={clsx(
              'border border-b-0 border-[#e0e0e0]',
              t === 'Redes' ? 'w-[46px]' : 'w-[51px]',
              tab === t ? 'h-[23px] bg-[#fafafa] pr-1 pb-1' : 'h-[20px] bg-[#f3f3f3]'
            )}
          >
            {t}
          </button>
        ))}
      </div>

      <div className="mr-[2px] ml-px flex min-h-0 flex-1 flex-col border border-t-0 border-[#e0e0e0] bg-[#f9f9f9]">
        <ul className="mt-px ml-[2px] min-h-0 flex-1 bg-[#f0f0f0]">
          {LAYERS.map(([name, color]) => (
            <li key={name} className={clsx('flex h-[18px] items-center text-[11px] text-black', name === 'F.Cu' && 'bg-[#e1e1e1]')}>
              <span className="flex w-4 justify-center">
                {name === 'F.Cu' && <span className="h-[9px] w-[5px] bg-[#4040f0] [clip-path:polygon(0_0,100%_50%,0_100%)]" />}
              </span>
              <span className={clsx('h-[11px] w-[14px]', color)} />
              <button type="button" aria-label={`Visibilidad ${name}`} className="mr-[5px] ml-[6px]">
                <EyeIcon visible={name === 'F.Cu' || name === 'Edge.Cuts'} />
              </button>
              {name}
            </li>
          ))}
        </ul>
        <div className="pt-[5px] pr-1 pb-[3px] pl-[6px]">
          <button type="button" className="flex h-[18px] w-full items-center gap-[3px] bg-white pl-[6px] text-[11px] text-[#666]">
            <span className="h-[7px] w-[4px] bg-[#444] [clip-path:polygon(0_0,100%_50%,0_100%)]" />
            Opciones de visualización de capas
          </button>
        </div>
      </div>

      <div className="flex shrink-0 flex-col pt-[10px] pr-[6px] pb-[6px] pl-[7px] text-[11px] leading-[19px]">
        <span>Preconfiguraciones (Ctrl+Tab):</span>
        <Combo label="Preconfiguraciones (Ctrl+Tab)" value="---" width="w-full" />
        <span className="mt-px">Vistas (Shift+Tab):</span>
        <Combo label="Vistas (Shift+Tab)" value="---" width="w-full" />
      </div>
    </section>
  );
};

const SelectionFilter = () => (
  <section className="shrink-0 bg-[#f0f0f0]">
    <PanelTitle>Filtro de selección</PanelTitle>
    <div className="grid h-[99px] auto-rows-[15px] grid-cols-[133px_1fr] pt-[5px] pl-[5px]">
      {FILTERS.map(([label, on]) => (
        <label key={label} className="flex items-center gap-[3px] text-[11px] whitespace-nowrap text-black">
          <span className="grid shrink-0">
            <input
              type="checkbox"
              defaultChecked={on}
              className="peer col-start-1 row-start-1 size-[13px] appearance-none rounded-[3px] border border-[#777] bg-[#f6f6f6] checked:border-[#0560b5] checked:bg-[#0560b5]"
            />
            <svg viewBox="0 0 13 13" className="pointer-events-none invisible col-start-1 row-start-1 size-[13px] peer-checked:visible">
              <path d="M3.5 6.5L5.5 8.5L9.5 4.5" fill="none" stroke="#fff" />
            </svg>
          </span>
          {label}
        </label>
      ))}
    </div>
  </section>
);

const App = () => (
  <div className="flex h-screen flex-col overflow-hidden bg-[#f0f0f0] font-['Open_Sans','Noto_Sans',sans-serif] text-[12px] text-black">
    <header className="flex h-[23px] shrink-0 items-center bg-[#f2f2f2] text-[#8a8a8a]">
      <svg viewBox="0 0 16 16" className="mr-[5px] ml-[2px] size-4">
        <rect width="16" height="16" rx="2" fill="#12401a" />
        <path d="M4 15C5 8 9 10 10 6V1M9 15C9 11 13 11 13 7V1" fill="none" stroke="#3fa044" strokeWidth="2" />
        <circle cx="3.5" cy="4" r="2" fill="#f0920a" />
        <circle cx="3.5" cy="12" r="2.2" fill="#f0920a" />
        <circle cx="12" cy="12" r="2" fill="#f0920a" />
      </svg>
      <h1 className="flex-1 text-[12px]">Proyecto Flor — Editor de placas</h1>
      <button type="button" aria-label="Minimizar" className="flex w-[46px] justify-center">
        <svg viewBox="0 0 10 10" className="size-[10px]"><path d="M0 5.5H10" stroke="#777" /></svg>
      </button>
      <button type="button" aria-label="Restaurar" className="flex w-[46px] justify-center">
        <svg viewBox="0 0 10 10" className="size-[10px]"><path d="M0.5 2.5H7.5V9.5H0.5ZM2.5 2V0.5H9.5V7.5H8" fill="none" stroke="#777" /></svg>
      </button>
      <button type="button" aria-label="Cerrar" className="flex w-[46px] justify-center">
        <svg viewBox="0 0 10 10" className="size-[10px]"><path d="M0.5 0.5L9.5 9.5M9.5 0.5L0.5 9.5" stroke="#777" /></svg>
      </button>
    </header>

    <nav className="flex h-[18px] shrink-0 items-end bg-white text-[11px] leading-[16px] text-[#6e6e6e]">
      {MENUS.map((menu) => (
        <button key={menu} type="button" className="px-[7px]">{menu}</button>
      ))}
    </nav>

    <div className="flex h-[38px] shrink-0 items-center pl-1">
      {TOP_TOOLS.map((tool, i) => (tool === '|' ? <Separator key={i} /> : <ToolButton key={i} name={tool} />))}
    </div>

    <div className="flex h-[32px] shrink-0 items-center pb-[2px] pl-[5px]">
      <Combo label="Ancho de pista" value="Pista: usar el ancho de clase de nodo" width="w-[221px]" small />
      <span className="ml-px flex"><ToolButton name="trackWidth" /></span>
      <Separator />
      <span className="w-px" />
      <Combo label="Tamaño de vía" value="Vía: utilizar los tamaños de las clases de nodos" width="w-[271px]" small />
      <Separator />
      <span className="w-[2px]" />
      <Combo label="Capa activa" value="F.Cu (PgUp)" width="w-[137px]" swatch />
      <button type="button" aria-label="Par de capas" className="mx-[5px]">
        <svg viewBox="0 0 24 24" className="size-6">{ICONS.layerPair}</svg>
      </button>
      <Separator />
      <Combo label="Cuadrícula" value="0.4000 mm (15.75 mils)" width="w-[167px]" />
      <Separator />
      <span className="w-px" />
      <Combo label="Zum" value="Zum 5.00" width="w-[117px]" />
    </div>

    <div className="flex min-h-0 flex-1">
      <VerticalTools tools={LEFT_TOOLS} />
      <main className="min-w-0 flex-1 border-t border-l border-[#9a9a9a]">
        <Board />
      </main>
      <div className="flex border-l border-[#c8c8c8]">
        <VerticalTools tools={RIGHT_TOOLS} />
      </div>
      <aside className="flex w-[286px] shrink-0 flex-col gap-1 border-l-4 border-[#dcdcdc] bg-[#dcdcdc]">
        <AppearancePanel />
        <SelectionFilter />
      </aside>
    </div>

    <dl className="flex h-[32px] shrink-0 gap-[30px] border-t border-[#d4d4d4] pl-[11px] text-[11px] leading-[15px] text-[#6e6e6e]">
      {STATS.map(([label, value]) => (
        <div key={label}>
          <dt>{label}</dt>
          <dd>{value}</dd>
        </div>
      ))}
    </dl>

    <footer className="flex h-[23px] shrink-0 items-stretch border-t border-b border-t-[#d4d4d4] border-b-[#b4b4b4] text-[11px] leading-[21px] whitespace-pre *:border-l *:border-[#d4d4d4] *:pl-[3px]">
      <div className="flex-1" />
      <div className="w-[78px]">Z 6.43</div>
      <div className="w-[160px]">X 141.6000  Y 118.8000</div>
      <div className="w-[250px]">dx 141.6000  dy 118.8000  dist 184.8351</div>
      <div className="w-[185px]">cuadrícula 0.4000</div>
      <div className="w-[79px]">mm</div>
      <div className="w-[173px]" />
      <div className="w-[139px]" />
    </footer>
  </div>
);

export default App;
